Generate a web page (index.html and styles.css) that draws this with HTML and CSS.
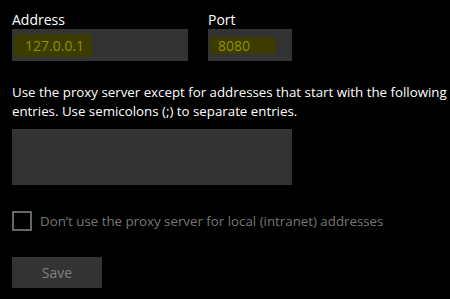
FILE: index.html
```html
<!DOCTYPE html>
<html>
<head>
  <title>Proxy</title>
  <link rel="stylesheet" href="styles.css">
</head>
<body>

<div class="fields">
  <div class="field address">
    <div class="label">Address</div>
    <div class="box"><span class="mark">127.0.0.1</span></div>
  </div>
  <div class="field port">
    <div class="label">Port</div>
    <div class="box"><span class="mark">8080</span></div>
  </div>
</div>

<p class="note">Use the proxy server except for addresses that start with the following entries. Use semicolons (;) to separate entries.</p>

<div class="exceptions"></div>

<div class="check">
  <span class="checkbox"></span>
  <span class="check-label">Don’t use the proxy server for local (intranet) addresses</span>
</div>

<button class="save">Save</button>

</body>
</html>
```

FILE: styles.css
```css
body { margin: 0; padding: 10px 12px; background: #000; color: #fff; font-family: "Open Sans", sans-serif; font-size: 13.3px; }
.fields { display: flex; gap: 20px; }
.label { line-height: 19px; font-size: 14px; }
.box { height: 32px; background: #333; box-sizing: border-box; padding: 5px 2px; }
.address .box { width: 176px; }
.port .box { width: 84px; }
.mark { display: inline-block; height: 23px; line-height: 23px; padding: 0 8px 0 11px; background: #3c3c00; color: #8f8f00; border-radius: 4px; font-size: 14px; }
.port .mark { height: 17px; line-height: 17px; margin-top: 3px; padding: 0 26px 0 8px; }
.note { margin: 22px 0 0; line-height: 19px; width: 440px; }
.exceptions { margin-top: 8px; width: 280px; height: 56px; background: #333; }
.check { display: flex; align-items: center; gap: 8px; margin-top: 26px; color: #777; }
.checkbox { width: 16px; height: 16px; border: 2px solid #666; }
.save { margin-top: 26px; width: 90px; height: 31px; border: none; background: #333; color: #808080; font-family: inherit; font-size: 14px; }
```
